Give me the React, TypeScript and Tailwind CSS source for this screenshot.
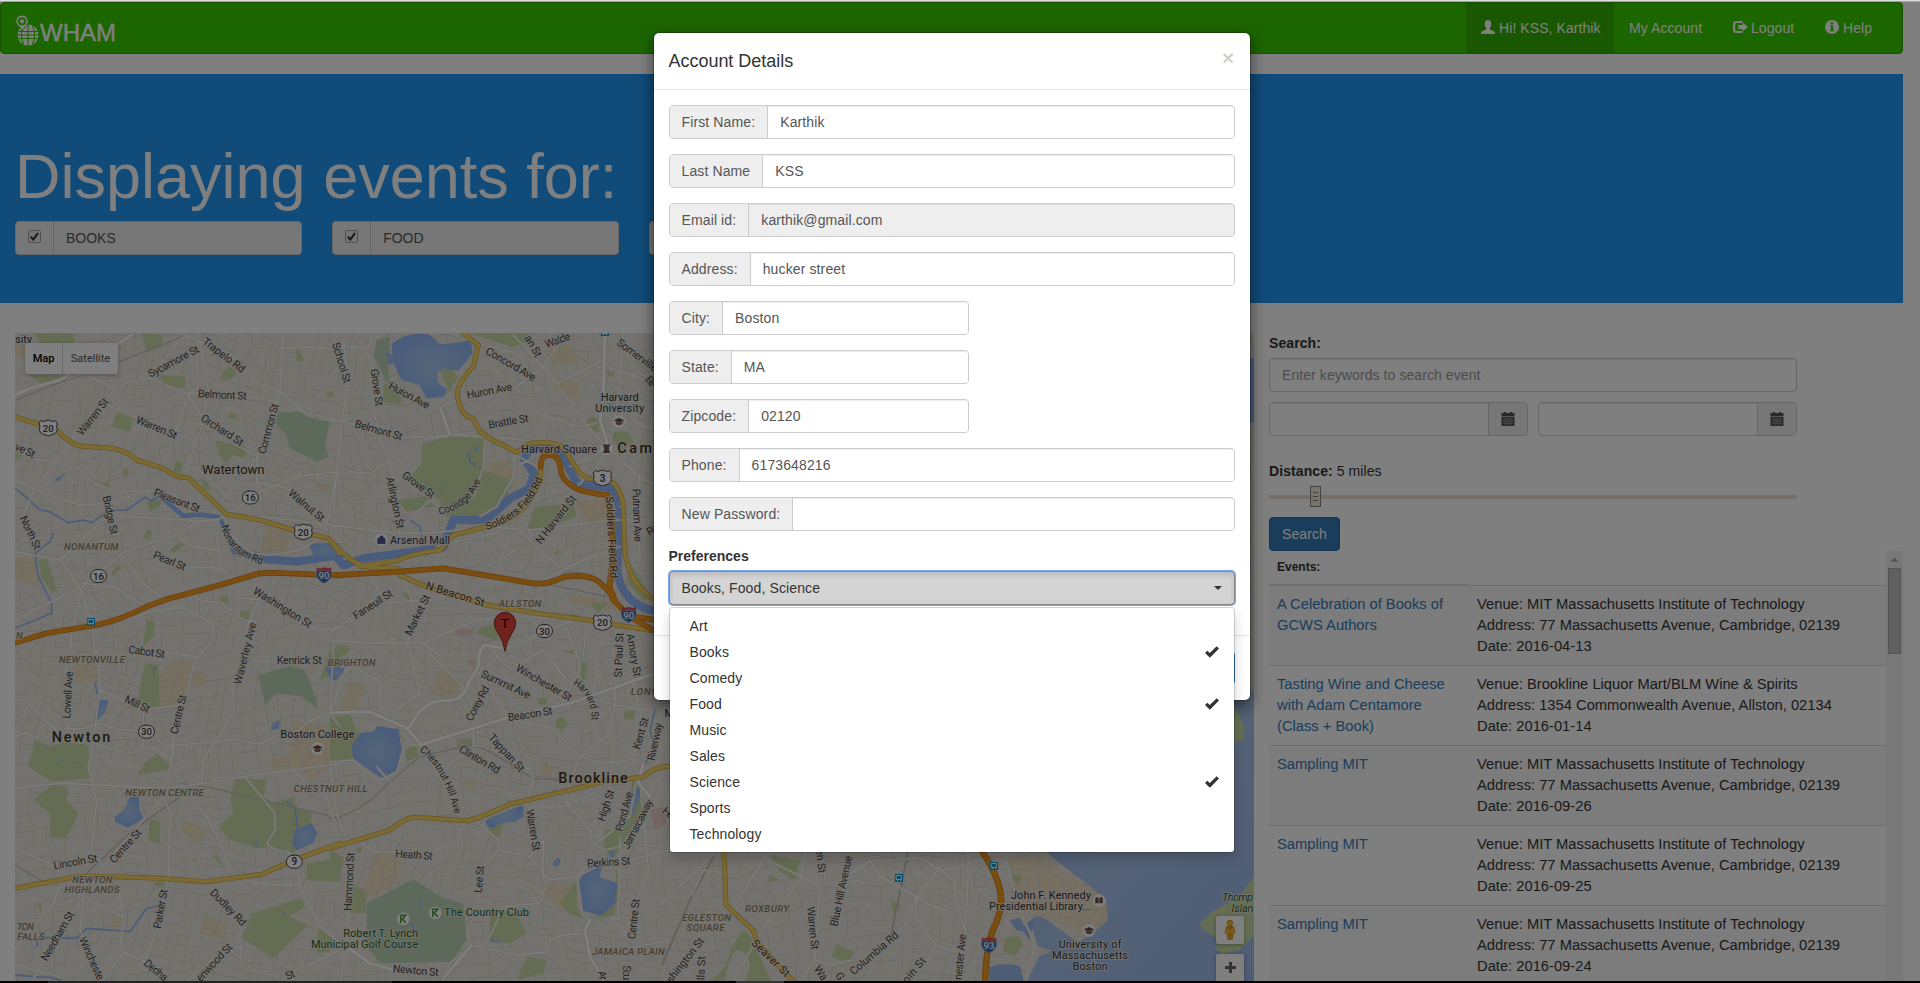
import React from "react";

/* ------------------------------------------------------------------ */
/* Icons                                                              */
/* ------------------------------------------------------------------ */

const UserIcon = () => (
  <svg viewBox="0 0 14 14" className="h-[14px] w-[14px] fill-current">
    <path d="M7 0C9 0 10.3 1.4 10.3 3.6c0 1.9-.7 3.6-1.5 4.5v1.2c.3.7 4.4 1.8 5 3 .2.4.2 1 .2 1.7H0c0-.7 0-1.3.2-1.7.6-1.2 4.700-2.300 5-3V8.100C4.400 7.200 3.700 5.500 3.700 3.600 3.700 1.400 5 0 7 0z" />
  </svg>
);

const LogoutIcon = () => (
  <svg viewBox="0 0 15 14" className="h-[14px] w-[15px] fill-current">
    <path d="M3 1h6.500v2H3.400c-.8 0-1.200.4-1.200 1.100v5.700c0 .8.4 1.200 1.200 1.200H9.500v2H3c-1.900 0-3-1.100-3-3V4c0-1.900 1.100-3 3-3z" />
    <path d="M9.500 2.500L15 7l-5.500 4.500V9H5.300V5h4.200z" />
  </svg>
);

const InfoIcon = () => (
  <svg viewBox="0 0 14 14" className="h-[14px] w-[14px] fill-current">
    <path
      fillRule="evenodd"
      d="M7 0a7 7 0 1 1 0 14A7 7 0 0 1 7 0zM5.800 2.300v2h2.400v-2zM4.900 5.300v1h1v3.900h-1v1h4.200v-1h-1V5.300z"
    />
  </svg>
);

const CalendarIcon = () => (
  <svg viewBox="0 0 14 14" className="h-[14px] w-[14px]">
    <path fill="#555" d="M.5 1H3V0h2v1h4V0h2v1h2.500v3H.5z" />
    <path fill="#555" d="M.5 4.600h13V14H.5z" />
    <path
      stroke="#aaa"
      strokeWidth=".5"
      d="M2 7h10M2 9.200h10M2 11.400h10M4 6v7M6 6v7M8 6v7M10 6v7"
    />
  </svg>
);

const TickIcon = () => (
  <svg viewBox="0 0 14 12" className="h-[12px] w-[14px] fill-[#333]">
    <path d="M0 7l2.300-2.300 2.500 2.400L11.700.3 14 2.400 4.900 11.700z" />
  </svg>
);

const Logo = () => (
  <div className="flex items-end text-white">
    <svg viewBox="0 0 25 31" className="h-[31px] w-[25px]">
      <circle cx="13" cy="20" r="10.500" fill="#fff" />
      <path
        fill="none"
        stroke="#38cc00"
        strokeWidth="1.100"
        d="M2 16.500h22M2 23.500h22M2 20h22M13 9v22M8.500 11c-3 6-3 12 0 18M17.500 11c3 6 3 12 0 18"
      />
      <path
        fill="#fff"
        stroke="#38cc00"
        strokeWidth="1"
        d="M7 0a6.200 6.200 0 0 1 6.200 6.200C13.200 9.500 9 12 7.200 16.500 5.500 12 .8 9.500.8 6.200A6.200 6.200 0 0 1 7 0z"
      />
      <circle cx="7" cy="6.300" r="4" fill="#38cc00" />
      <circle cx="7" cy="6.300" r="2.100" fill="#fff" />
    </svg>
    <span className="text-[24px] leading-[26px] [-webkit-text-stroke:0.4px_white]">WHAM</span>
  </div>
);

/* ------------------------------------------------------------------ */
/* Map                                                                */
/* ------------------------------------------------------------------ */

type TileKey = "a" | "b" | "c" | "d";
const ORIGIN: Record<TileKey, [number, number]> = {
  a: [0, 320],
  b: [330, 320],
  c: [0, 650],
  d: [330, 650],
};
type TileData = Partial<Record<TileKey, string[]>>;

function TileLayer({ data, ...props }: { data: TileData } & React.SVGProps<SVGGElement>) {
  return (
    <g {...props}>
      {(Object.keys(data) as TileKey[]).map((k) => (
        <g key={k} transform={`translate(${ORIGIN[k][0]} ${ORIGIN[k][1]}) scale(0.33333)`}>
          {data[k]!.map((d, i) => (
            <path key={i} d={d} />
          ))}
        </g>
      ))}
    </g>
  );
}

function streetMesh() {
  const step = 12;
  const hash = (i: number, j: number, s: number) => {
    const v = Math.sin(i * 127.1 + j * 311.7 + s * 74.7) * 43758.5453;
    return v - Math.floor(v);
  };
  const pt = (i: number, j: number) => {
    const x = 5 + i * step;
    const y = 325 + j * step;
    const dx = Math.sin(y / 47 + x / 130) * 14 + (hash(i, j, 1) - 0.5) * 6;
    const dy = Math.sin(x / 58 - y / 90) * 15 + (hash(i, j, 2) - 0.5) * 6;
    return `${(x + dx).toFixed(1)} ${(y + dy).toFixed(1)}`;
  };
  let d = "";
  for (let i = -2; i < 108; i++) {
    for (let j = -2; j < 58; j++) {
      if (hash(i, j, 3) > 0.24) d += `M${pt(i, j)}L${pt(i + 1, j)}`;
      if (hash(i, j, 4) > 0.36) d += `M${pt(i, j)}L${pt(i, j + 1)}`;
    }
  }
  return d;
}
const MESH = streetMesh();

const TAN: TileData = {
  a: ["M795 620L870 630 865 690 780 700z", "M45 715L100 715 130 790 100 795 45 780z", "M45 75L75 80 75 115 45 110z", "M945 490h45v28l-30-5z"],
  b: ["M470 430L545 415 555 500 490 490z", "M735 540L830 540 830 620 760 600z", "M680 170L750 190 740 240 670 210z", "M720 820L860 850 850 870 720 850z", "M640 90l80-20 20 60-70 10z"],
  c: ["M215 50L295 35 300 95 230 100z", "M520 25L575 35 560 120 530 165 475 170 475 80z", "M575 60l50 15-10 40-55-10z", "M880 215L1020 230 1020 330 930 390 900 350 810 360 820 310 870 320z", "M560 505L620 545 595 585 540 535z", "M610 800l70 20-10 50-70-20z", "M340 795l25 5-5 40-25-8z"],
  d: ["M135 605L215 620 200 700 100 750 110 690z", "M640 705L730 700 720 750 690 780 640 730z", "M640 335l30 20-10 30-35-15z", "M330 60l70 30-20 60-80-30z", "M60 90l50 20-30 60-60 30z", "M405 385l30 10-5 30-25-10z"],
};

const PINK: TileData = {
  b: ["M375 925L430 930 430 950 370 945z"],
  d: ["M960 480L1000 470 1010 520 975 540z", "M415 25l20 5-5 20-12-5z"],
};

const PARKS: TileData = {
  a: [
    "M100 40L220 40 225 70 130 75z", "M425 40L490 45 485 80 440 95z", "M90 165L180 165 190 185 120 190z", "M480 165L555 168 555 205 490 195z",
    "M350 275L400 295 390 335 337 320z", "M690 140L710 155 700 175 660 182 665 160z", "M645 360L700 375 720 365 745 390 730 415 700 405 680 430 660 410z",
    "M890 80L910 115 905 128 888 120z", "M690 275L710 285 705 300 685 295z", "M530 420L550 430 540 460 520 455z", "M370 445L388 450 380 472 368 465z",
    "M440 545L485 540 480 560 450 575z", "M438 630l18 3-5 27-20-4z", "M540 665L555 672 520 700 510 690z", "M115 720L140 715 170 810 155 820 125 770z",
    "M440 895L465 910 460 950 430 980z", "M660 825L685 830 685 862 655 850z", "M720 872h30l-2 30-26-2z", "M355 735l10 8-25 25-8-10z",
    "M780 485l20 10-12 10z", "M600 470q40 30 32 45l-20-12z", "M980 215h22v14h-22z", "M305 488h25l-5 20-15-5z", "M45 395l25 10-25 20z",
  ],
  b: [
    "M420 40L600 40 590 65 550 82 480 60z", "M330 150L365 145 385 175 355 215z", "M160 190L210 210 215 255 160 245z", "M275 375L365 345 465 355 460 450 545 480 530 540 440 590 350 590 330 540 250 500 240 470 275 430z",
    "M200 540L305 525 310 560 230 575z", "M615 560L730 550 740 590 620 630 590 625z", "M785 290l25 10-5 40-45-30z", "M850 335l45 0 15 30-30 28-35-35z", "M830 155h25l-2 15-20-2z",
    "M895 720L965 830 940 840 890 790z", "M215 815L245 820 240 850z", "M460 920L520 905 500 960 435 940z", "M20 975l40 5-10 25-50 8z", "M780 850l55 0-30 28z", "M720 880l30 5-5 12-25-5z", "M680 690l10 5-10 10-8-6z",
  ],
  c: [
    "M435 40L475 45 480 175 410 165z", "M105 270L150 290 190 275 265 285 270 385 155 395 85 350z", "M470 310L510 345 500 360 410 375 440 335z", "M155 405L205 410 200 450 235 490 200 565 150 560 150 490 100 450z",
    "M450 505L480 515 480 580 445 570z", "M705 385L800 390 790 440 820 460 880 440 890 470 935 490 930 560 880 610 820 590 770 595 690 570 655 530 700 490 690 450z",
    "M905 745L915 770 865 800 925 825 820 925 725 865 755 790z", "M920 640L1020 625 1020 695 920 690z", "M955 835l45 20-10 50-40 5z", "M635 612l20 5 10 32z", "M460 695h35l-5 15-30-3z", "M110 762l15 0 0 30z", "M990 0h30v60l-60 30z",
  ],
  d: [
    "M0 200L60 195 90 260 65 330 0 335z", "M225 290L260 285 265 320 230 335z", "M380 268L425 265 430 288 380 290z", "M680 205l20-5 15 20-20 25-18-15z", "M880 185l35-5-5 30-25-3z",
    "M910 370L930 390 945 470 890 560 880 590 850 620 820 600 825 540 870 530 900 450z", "M740 690L690 760 715 790 765 810 740 770z", "M860 650L872 690 850 800 790 805 820 790 855 760z", "M480 780L555 785 590 850 540 880 480 870z",
    "M590 920L650 930 640 970 560 990z", "M70 705L105 720 110 790 60 790z", "M620 145h30v20l-25-2z", "M470 510l50 10-10 40-30-5z", "M755 35l20 5-15 60-10-30z", "M80 595l15-5 0 15-15 3z", "M0 600l40 20-10 60-30 10z", "M695 0h50v20z",
  ],
};

const GOLF: TileData = {
  a: ["M835 275L905 275 920 290 990 305 975 370 985 410 950 425 870 385 860 345 825 310z"],
  b: ["M180 50L175 180 200 190 180 200 130 110 140 60z"],
  c: ["M775 75L870 48 915 60 950 150 950 175 905 140 830 130 795 165z"],
  d: ["M250 688L340 745 400 760 410 870 365 935 150 940 110 890 110 760z"],
};

const LAKES: TileData = {
  a: ["M202 453L175 485 165 478z", "M925 670l90 0 10 45-80 0z", "M280 409l5 4-4 4-5-3z", "M225 490l2 10-7 0z"],
  b: ["M185 72Q235 30 300 45L330 72Q380 70 420 60L428 100 385 152 342 146 325 155 322 185 352 210 340 230 290 236 268 195 215 180 190 130z", "M435 380l12 5-5 10-10-5z", "M168 96l20 8 0 30-14-2z", "M330 500l10 3-8 7z"],
  c: ["M300 150L325 150 315 190 290 212 288 190z", "M390 440L417 440 418 480 430 505 385 533 345 515 345 500 372 480z", "M820 218l20-5-5 25-25 0z", "M975 55L1020 50 1015 85 995 92z", "M885 540L935 520 952 550 940 580 890 600 876 580z", "M845 785l12 3-5 8z", "M770 568l0 22-8-8z", "M460 50l8 5-3 15-6-8z", "M180 328l10 4-8 4zM220 340l10-4-4 6z"],
  d: ["M65 290L90 250 130 245 142 228 205 238 215 300 200 360 155 385 110 355 70 325z", "M467 512L500 495 580 465 580 500 555 515 510 520 485 538 470 525z", "M748 690L790 640 815 650 810 682 862 700 855 760 812 798 760 782z", "M905 430L925 412 935 435 905 498 892 470z", "M670 632l18-8 4 20-20 5z", "M840 605l15 0-3 18-15-4z", "M0 52L48 55 20 90 0 92z", "M265 748l8 5 2 20-8-5z", "M240 815l18 20 8 20-15-5z", "M480 868l35 6-5 4-28-3z"],
};

const STREAMS: TileData = {
  a: ["M45 505L65 520 120 570 150 575 205 608 250 600 275 608 330 570 380 570 435 532 455 543 480 525 550 590 600 580 655 590", "M160 640L150 665 105 700 115 770 155 850 155 880 45 925"],
  b: ["M185 605L240 600 270 620 275 650", "M415 400l5 25 15 12"],
  c: ["M45 975L100 980 150 982 180 990", "M110 890L115 862 230 865 260 835 390 845 440 775 475 768", "M285 100L292 130", "M860 455l25 20 8 60"],
  d: ["M975 180L960 240 975 290 940 350"],
};

const RIVER_NARROW: TileData = {
  a: ["M480 528L550 588 600 583 655 592 690 640 700 690"],
};

const RIVER: TileData = {
  a: ["M705 690L800 718 890 725 1020 705"],
  b: ["M0 690L40 736 100 715 250 695 340 682 370 600 450 600 480 590 540 535 598 505 612 460 582 415 600 385 680 382 710 430 740 490 850 505 868 560 862 760Q880 850 968 872"],
};

const RAIL: TileData = {
  a: ["M45 240Q220 170 350 128L560 45"],
  b: ["M640 790L830 830M700 760Q800 740 850 850"],
  c: ["M260 670L400 540 540 440M540 400Q640 410 700 430L1020 505", "M45 645L130 695"],
  d: ["M0 505Q80 500 180 395L270 320 400 290Q450 280 520 330L610 385 700 390"],
};

const STREETS: TileData = {
  a: [
    "M45 215L130 195 250 160 395 45", "M345 205L390 185 450 175 530 70 560 45", "M260 165L345 205 310 250 220 350 165 430 100 510 70 590", "M310 250L585 365", "M450 175L560 220 600 218M745 230L830 245 910 275 1020 305",
    "M555 45L600 65 690 100 765 185 840 215 910 275", "M555 45L590 110 595 200 565 225", "M600 65L625 210 605 320 560 440 555 470", "M565 225L520 350 490 440", "M565 225L605 290M700 370L775 410 730 470 660 550",
    "M850 45L840 215 800 330 770 410 770 490 850 500", "M45 370L100 415 230 440 280 490 350 515 460 512", "M45 480L120 515 240 555 350 548 420 515", "M350 588L600 602 655 598", "M45 695L180 720 320 590 320 520",
    "M180 720L245 810 215 940 212 1000", "M45 900L100 870 240 805 375 693 520 650 590 608 655 598 690 580 780 515 900 468 1020 455", "M245 810L280 930 285 1010", "M360 700L430 790 480 830M245 790L340 800 420 850", "M460 675L480 720 560 740 665 745",
    "M655 598L650 660 665 745 690 780 860 880 950 930 1020 925", "M540 650Q560 690 660 690", "M675 600Q690 660 760 700L810 705 900 690 960 655", "M710 585L880 600 1020 620", "M850 500L940 560 980 610 1010 470", "M440 880L350 905 250 930M440 880Q500 860 550 865L640 910 640 950 600 1010", "M710 790L720 835 800 840", "M560 440Q600 440 650 500L700 545",
    "M775 840L745 910 730 1000", "M840 85L930 80 1020 90", "M580 825Q600 850 660 845L730 900 770 905",
  ],
  b: [
    "M0 75L105 85 150 45M105 85L140 170 130 260", "M40 60L55 190 35 310 10 560", "M0 300L40 305 80 315M220 352L350 350 440 335", "M0 470L60 455 120 460 180 420 280 360 350 345 460 350 560 358 700 375", "M130 260L150 360 180 430 190 480M215 620L300 540 330 560",
    "M360 345L330 262 380 240M180 200L330 262", "M445 70L560 100 640 140 680 190 765 310 830 380", "M550 45L640 140M560 200L640 140 700 50", "M640 285L740 320 800 310M825 40L810 300 835 380 800 440 720 520 680 590", "M880 40L870 180 850 330 835 380 925 470 968 490",
    "M835 380L770 420 720 440", "M680 190L820 120M560 240L640 290 660 280", "M465 360L460 440 430 530M555 400L550 470 500 560 450 590", "M550 400L620 440M555 440L600 420", "M0 615L200 640 300 640 470 620 600 630 850 600 968 600", "M330 690L310 770 280 830 215 1015",
    "M540 635L500 760 470 860 M470 740L560 690M320 680L450 650 520 635", "M570 630L640 700 690 740M640 780L760 720 870 680", "M120 760L150 820 70 890 0 940M150 850L280 840", "M215 770L250 850", "M0 960L120 970 280 968 440 900 530 890", "M440 1010L455 980 520 990 590 960 730 900", "M280 970L340 1015M600 890L660 960M630 800L610 890 680 900",
    "M870 560L920 580 930 700 890 740", "M960 500L920 560 930 460", "M830 140L920 170 968 160M910 300l55 30 0-40", "M770 910L760 1010M860 920L850 1010M910 930L900 1010M560 880L520 1010M700 895L740 1010",
  ],
  c: [
    "M45 145L80 155 140 215 170 240", "M45 260Q70 240 100 258L130 265 200 235 240 238 290 220 370 240 410 240", "M470 262Q490 295 530 285L650 275 700 268 780 282 830 258 900 240Q930 200 1020 186", "M200 0L205 240M290 0L300 110 280 280 265 350 290 450 275 600 310 650",
    "M300 120L430 180 430 290M290 285L390 310 460 290 500 320 520 320 520 285", "M520 260L515 345 500 385 490 440M605 0L580 50 560 130 540 160 520 260", "M45 415L180 400 490 415 620 400 760 375 880 360 1020 340", "M700 90L700 190 610 330 605 395", "M440 0L590 20M755 30L900 42 M740 0L700 110",
    "M45 595L170 650 185 690 160 760 110 820 45 900", "M290 670L490 440 510 490 505 680 470 840 435 935", "M575 440L620 500 670 600 690 670", "M735 380L825 490 825 540 800 580Q820 605 865 605L890 640 900 710 960 830 1020 880", "M725 685Q780 710 900 705", "M250 740L370 800 360 900 430 935 490 960M250 740L240 840 300 970",
    "M250 700L250 740 210 800 100 985M355 720L370 800", "M440 935L370 910 310 990", "M630 695L640 740 720 830 720 880 725 940 770 965 830 980M880 965L1020 900", "M690 885L560 990M690 890L730 895", "M45 940L100 960 180 980", "M880 360L930 410 980 440 1010 540", "M1000 0L990 190 1020 230M430 180L540 165",
  ],
  d: [
    "M0 335L70 330Q100 360 145 390L200 370 220 300 240 285 270 285", "M45 60L70 50 150 95 150 180M0 190L10 160 70 0M200 180L270 130 240 0", "M0 340L20 490 50 570 60 620 50 890 30 920", "M290 0L400 110 430 180 430 285 460 290", "M490 0L520 40 720 160M440 60L520 180 580 220 660 230 750 320 820 340",
    "M420 95L500 20 600 60M550 50L640 0 720 100 800 150", "M790 0L800 60 780 180 800 260 850 290M860 0L855 170 830 260 750 320 710 420", "M640 0L700 80 720 160M800 150L900 175 968 180M900 60L930 180 940 260", "M480 240L490 300 600 360 610 395 590 455", "M410 515L390 540 385 580 310 600M240 605L130 605 90 575 45 590",
    "M280 300L400 500M350 350L430 290M440 515L505 570 505 600 600 620 655 690 740 680 780 640", "M505 600L460 650 440 780 410 850 425 885M590 455L600 490M600 620L640 570 640 690", "M655 690L630 760 520 770 485 850 460 885", "M425 885L360 940 340 985M425 885L560 915 650 905 660 870 700 855 780 850", "M50 900L110 930 200 970M0 850L50 900 30 1000",
    "M600 470L700 470 800 425M710 425L710 460 780 540 785 575 820 600M840 420L780 550", "M920 390L900 500 800 580M930 390L945 560 955 660 880 860M820 640L740 680 755 790 775 815", "M870 560L865 810 840 800 900 860M775 920L870 900 1020 870M820 340L900 330 940 260", "M820 600L870 590 968 470M900 630L1020 600", "M140 350L180 395", "M740 0L750 60 690 170M830 345L840 420",
  ],
};

const MAIN_STREETS: TileData = {
  a: ["M45 225L90 205 180 180 395 45"],
  b: ["M330 262L360 345", "M445 1010L460 975 525 985", "M825 40L820 220 810 300 835 380"],
  d: ["M0 188L120 185 230 235 240 230Q280 150 340 152 400 155 415 100L445 50 450 0", "M270 285L430 235 540 200 720 160 968 72", "M230 235L275 285", "M50 890L120 940 210 965M340 985L425 885", "M780 810L765 840 780 920 820 990M940 340L925 400 960 440"],
};

const YELLOW: TileData = {
  a: ["M45 290L120 315 175 335Q210 370 240 378L340 385Q385 395 410 420L490 445Q520 472 565 473L680 583 780 600 880 630 985 655 1020 700"],
  b: [
    "M0 660L40 700Q80 738 120 742L205 746", "M90 740L200 722Q250 700 330 690L370 645 470 620Q560 600 600 540L632 480 632 430", "M400 40L445 75 430 140Q370 200 385 240 395 290 430 295L450 335Q500 370 520 375L560 398 600 370Q680 360 700 385L750 460Q790 490 815 475 870 480 880 560L885 700Q900 790 968 835",
    "M210 766L290 800 470 855 620 880 770 900 968 932",
  ],
  c: ["M45 715L190 688Q230 675 340 680L480 685 620 695 785 673 870 635 1020 580"],
  d: ["M0 595L180 540Q230 500 260 502L410 512Q450 505 540 462L700 425 830 392 940 382Q970 350 1020 348"],
};

const ORANGE: TileData = {
  a: ["M45 968L140 940 290 915Q360 900 440 860L500 838 660 795 770 762Q800 757 860 760L1020 766"],
  b: ["M0 766L160 758 340 745 610 790Q650 795 700 772 760 760 800 780 840 810 850 840L900 890 968 930", "M632 440Q632 405 655 405 690 405 692 450 695 480 730 500 760 518 832 525", "M845 770L838 800 855 840M895 888L968 898", "M832 525L845 600 850 700 838 800"],
};

const YELLOW_SE = "M724 851L726 905 742 920 753 930 757 942 794 982";
const ORANGE_SE = "M982 851Q996 872 1000 890T993 930Q986 948 985 982";
const STREETS_SE =
  "M716 852L660 905M692 895L703 870 725 873M766 855L735 905M766 859L820 886 815 960 800 982M822 853L825 880M733 982L762 930 800 880 805 852M840 880L870 861 920 858 941 870 955 868 985 858M870 861L880 876 930 905 950 912M941 866L918 895 905 925 850 975M918 895L915 915 935 945 925 965 900 982M935 945L965 955M941 870L955 882 955 900 965 930 960 982M968 852L968 880 965 930M1005 852Q1010 880 1022 915L1035 945 1025 982M852 960L830 965 815 960M850 885L855 880 868 884";

type Kind = "road" | "hwy" | "area" | "town" | "city" | "poi" | "park" | "mall";
const STYLES: Record<Kind, { fill: string; size: number; weight: number; italic?: boolean }> = {
  road: { fill: "#484848", size: 10.9, weight: 400 },
  hwy: { fill: "#5a3410", size: 10.9, weight: 400 },
  area: { fill: "#8b7d68", size: 9.8, weight: 500, italic: true },
  town: { fill: "#3d3220", size: 13.2, weight: 400 },
  city: { fill: "#3d3220", size: 14.4, weight: 500 },
  poi: { fill: "#333333", size: 11, weight: 400 },
  park: { fill: "#28601c", size: 11, weight: 400 },
  mall: { fill: "#363660", size: 11, weight: 400 },
};

/* tile, centre x, centre y, rotation, text, length, kind */
type Label = [TileKey | "p", number, number, number, string, number, Kind?];
const LABELS: Label[] = [
  ["a", 71, 57, 0, "sity", 50, "poi"],
  ["a", 520, 124, -28, "Sycamore St", 168],
  ["a", 672, 105, 37, "Trapelo Rd", 150],
  ["a", 667, 224, 3, "Belmont St", 147],
  ["a", 667, 330, 33, "Orchard St", 145],
  ["a", 805, 326, -75, "Common St", 155],
  ["a", 278, 290, -52, "Warren St", 132],
  ["a", 470, 322, 23, "Warren St", 130],
  ["a", 76, 391, 25, "ve St", 62],
  ["a", 700, 447, 0, "Watertown", 188, "town"],
  ["a", 331, 585, 78, "Bridge St", 118],
  ["a", 531, 541, 21, "Pleasant St", 145],
  ["a", 92, 638, 65, "North St", 108],
  ["a", 274, 681, 0, "NONANTUM", 164, "area"],
  ["a", 509, 722, 22, "Pearl St", 102],
  ["a", 920, 556, 40, "Walnut St", 130],
  ["a", 848, 862, 32, "Washington St", 200],
  ["a", 735, 1000, -76, "Waverley Ave", 190],
  ["a", 440, 995, 8, "Cabot St", 110],
  ["a", 58, 948, 0, "N", 22, "area"],
  ["c", 276, 30, 0, "NEWTONVILLE", 198, "area"],
  ["b", 35, 128, 73, "School St", 125],
  ["b", 543, 132, 30, "Concord Ave", 168],
  ["b", 238, 226, 28, "Huron Ave", 135],
  ["b", 478, 212, -11, "Huron Ave", 138],
  ["b", 141, 202, 82, "Grove St", 112],
  ["b", 146, 330, 16, "Belmont St", 147],
  ["b", 535, 304, -10, "Brattle St", 122],
  ["b", 266, 494, 36, "Grove St", 112],
  ["b", 196, 548, 78, "Arlington St", 158],
  ["b", 687, 387, 0, "Harvard Square", 228, "poi"],
  ["b", 869, 232, 0, "Harvard", 114, "poi"],
  ["b", 869, 265, 0, "University", 147, "poi"],
  ["b", 998, 385, 0, "Cambridge", 272, "city"],
  ["b", 677, 598, -52, "N Harvard St", 175],
  ["b", 846, 652, 87, "Soldiers Field Rd", 245, "hwy"],
  ["b", 922, 586, 88, "Putnam Ave", 160],
  ["b", 922, 105, 36, "Somerville", 142],
  ["b", 682, 60, -20, "Walde", 78],
  ["b", 610, 78, 60, "an St", 70],
  ["b", 962, 183, 50, "Be", 30],
  ["b", 962, 632, -30, "Ri", 24],
  ["b", 270, 660, 0, "Arsenal Mall", 180, "mall"],
  ["b", 376, 822, 17, "N Beacon St", 182, "hwy"],
  ["b", 570, 852, 0, "ALLSTON", 128, "area"],
  ["b", 128, 853, -33, "Faneuil St", 135],
  ["b", 262, 885, -64, "Market St", 132],
  ["c", 203, 135, -87, "Lowell Ave", 142],
  ["c", 412, 162, 25, "Mill St", 80],
  ["c", 535, 193, -77, "Centre St", 120],
  ["c", 898, 31, 0, "Kenrick St", 135],
  ["d", 65, 39, 0, "BRIGHTON", 143, "area"],
  ["c", 243, 262, 0, "Newton", 176, "city"],
  ["c", 952, 252, 0, "Boston College", 222, "poi"],
  ["c", 494, 427, 0, "NEWTON CENTRE", 236, "area"],
  ["c", 992, 417, 0, "CHESTNUT HILL", 222, "area"],
  ["c", 226, 635, -10, "Lincoln St", 132],
  ["c", 376, 588, -48, "Centre St", 125],
  ["c", 277, 690, 0, "NEWTON", 120, "area"],
  ["c", 276, 720, 0, "HIGHLANDS", 165, "area"],
  ["c", 76, 831, 0, "TON", 52, "area"],
  ["c", 93, 861, 0, "FALLS", 82, "area"],
  ["c", 172, 858, -60, "Needham St", 166],
  ["c", 275, 925, 66, "Wincheste", 138],
  ["c", 481, 777, -80, "Parker St", 120],
  ["c", 468, 960, 40, "Dedha", 82],
  ["c", 685, 772, 46, "Dudley Rd", 140],
  ["c", 642, 937, -47, "enwood St", 142],
  ["c", 870, 974, -25, "St", 28],
  ["d", 152, 850, 0, "Robert T. Lynch", 225, "park"],
  ["d", 104, 882, 0, "Municipal Golf Course", 322, "park"],
  ["d", 470, 787, 0, "The Country Club", 254, "park"],
  ["d", 257, 961, 5, "Newton St", 138],
  ["d", 57, 695, -87, "Hammond St", 175],
  ["d", 252, 614, 4, "Heath St", 112],
  ["d", 447, 688, -84, "Lee St", 82],
  ["d", 449, 328, 30, "Clinton Rd", 136],
  ["d", 530, 308, 47, "Tappan St", 142],
  ["d", 610, 540, 80, "Warren St", 125],
  ["d", 442, 160, -62, "Corey Rd", 115],
  ["d", 528, 103, 25, "Summit Ave", 160],
  ["d", 642, 98, 30, "Winchester St", 188],
  ["d", 600, 192, -9, "Beacon St", 135],
  ["d", 789, 385, 0, "Brookline", 208, "city"],
  ["d", 990, 126, 0, "LONGWOOD", 175, "area"],
  ["d", 866, 15, -88, "St Paul St", 135],
  ["d", 912, 15, 80, "Amory St", 130],
  ["d", 932, 250, -74, "Kent St", 98],
  ["d", 974, 275, -78, "Riverway", 115],
  ["d", 828, 466, -72, "High St", 98],
  ["d", 882, 485, -75, "Pond Ave", 122],
  ["d", 922, 522, -63, "Jamaicaway", 162],
  ["d", 836, 636, -4, "Perkins St", 130],
  ["d", 911, 807, -84, "Centre St", 122],
  ["d", 895, 906, 0, "JAMAICA PLAIN", 218, "area"],
  ["d", 890, 968, 90, "Sou", 45],
  ["d", 818, 976, 76, "Ar", 28],
  ["d", 1015, 488, 40, "He", 34],
  ["d", 1018, 190, 0, "M", 26, "poi"],
  ["p", 706.5, 918, 0, "EGLESTON", 49, "area"],
  ["p", 705.5, 928, 0, "SQUARE", 38, "area"],
  ["p", 767, 909, 0, "ROXBURY", 44, "area"],
  ["p", 771, 958, 44, "Seaver St", 48, "hwy"],
  ["p", 813, 928, 84, "Warren St", 43],
  ["p", 821, 861, 84, "en St", 24],
  ["p", 841, 891, -78, "Blue Hill Avenue", 72],
  ["p", 874, 953, -41, "Columbia Rd", 60],
  ["p", 914, 970, -50, "oin St", 30],
  ["p", 960, 957, -84, "nester Ave", 46],
  ["p", 685, 960, -52, "shington St", 54],
  ["p", 701, 968, -88, "lls St", 24],
  ["p", 821, 973, 55, "Wa", 15],
  ["p", 840, 976, 55, "G", 7],
  ["p", 1051, 895, 0, "John F. Kennedy", 80, "poi"],
  ["p", 1040, 906, 0, "Presidential Library...", 102, "poi"],
  ["p", 1090, 944, 0, "University of", 63, "poi"],
  ["p", 1090, 955, 0, "Massachusetts", 76, "poi"],
  ["p", 1090, 966, 0, "Boston", 35, "poi"],
  ["p", 1237.5, 897, 0, "Thomp", 31, "park"],
  ["p", 1242.5, 908, 0, "Islan", 22, "park"],
];

const CURVED: { tile: TileKey; id: string; d: string; text: string; len: number; kind: Kind }[] = [
  { tile: "a", id: "nonantum", d: "M664 618Q680 705 806 740", text: "Nonantum Rd", len: 176, kind: "road" },
  { tile: "b", id: "coolidge", d: "M328 584Q425 565 455 470", text: "Coolidge Ave", len: 168, kind: "road" },
  { tile: "b", id: "soldiers", d: "M470 630Q605 590 644 455", text: "Soldiers Field Rd", len: 236, kind: "hwy" },
  { tile: "d", id: "chestnut", d: "M268 302Q345 360 378 510", text: "Chestnut Hill Ave", len: 222, kind: "road" },
  { tile: "d", id: "harvard", d: "M728 104Q790 135 784 222", text: "Harvard St", len: 128, kind: "road" },
];

function MapLabel({ label }: { label: Label }) {
  const [tile, lx, ly, rot, text, len, kind = "road"] = label;
  const s = STYLES[kind];
  const x = tile === "p" ? lx : ORIGIN[tile][0] + lx / 3;
  const y = tile === "p" ? ly : ORIGIN[tile][1] + ly / 3;
  return (
    <text
      transform={`translate(${x} ${y}) rotate(${rot})`}
      y={s.size * 0.35}
      textAnchor="middle"
      fontSize={s.size}
      fontWeight={s.weight}
      fontStyle={s.italic || (kind === "park" && tile === "p") ? "italic" : "normal"}
      fill={s.fill}
      textLength={tile === "p" ? len : len / 3}
    >
      {text}
    </text>
  );
}

function Shield({ x, y, text, type }: { x: number; y: number; text: string; type: "us" | "state" | "i" }) {
  const wide = text.length > 1;
  return (
    <g transform={`translate(${x} ${y})`}>
      {type === "us" && (
        <path
          d="M-7-7.500L-5-6.500 0-7.800 5-6.500 7-7.500 9-4.500Q7.500-2 9 1.500 8.500 5.500 5 6.300L0 7.800-5 6.300Q-8.500 5.500-9 1.500-7.500-2-9-4.500z"
          fill="#fff"
          stroke="#4a4a4a"
          strokeWidth="1"
        />
      )}
      {type === "state" && <rect x={-8} y={-6.500} width={16} height={13} rx={6.500} fill="#fff" stroke="#4a4a4a" strokeWidth="1" />}
      {type === "i" && (
        <>
          <path d="M-7.500-4Q-9.500 4 0 8.500 9.500 4 7.500-4z" fill="#3b6fb5" stroke="#dde" strokeWidth=".5" />
          <path d="M-7.500-4.300L-7-7.500-4-6.500 0-7.800 4-6.500 7-7.500 7.500-4.300z" fill="#d0505a" />
        </>
      )}
      <text
        y={type === "i" ? 4 : 3.600}
        textAnchor="middle"
        fontSize={wide ? 9.600 : 10}
        fontWeight={500}
        fill={type === "i" ? "#fff" : "#333"}
        stroke="none"
      >
        {text}
      </text>
    </g>
  );
}

const PoiDot = ({ x, y, children }: { x: number; y: number; children: React.ReactNode }) => (
  <g transform={`translate(${x} ${y})`}>
    <circle r="6.300" fill="#fff" />
    {children}
  </g>
);

const Cap = () => (
  <path d="M-4.500-1.200L0-3.300 4.500-1.200 0 1zM-2.600.6L0 1.900 2.600.6V2.600Q0 4.200-2.600 2.600zM4-1v3.500" fill="#6b4a44" stroke="#6b4a44" strokeWidth=".5" />
);

const Golfer = () => <path d="M-3-3.600H3M2-3L-1 0 2 3.600M-2.500-2V3.800" fill="none" stroke="#3d8a2c" strokeWidth="1.400" />;

const Train = ({ x, y }: { x: number; y: number }) => (
  <g transform={`translate(${x} ${y})`}>
    <rect x="-4" y="-4" width="8" height="8" fill="#0d9ddb" />
    <path d="M-2.400-2.500h4.800v4h-4.800zM-1.800 3l.8-1.300M1.800 3L1 1.700" fill="none" stroke="#fff" strokeWidth="1" />
  </g>
);

function MapCanvas() {
  return (
    <svg
      viewBox="15 333 1239 648"
      className="block h-[648px] w-[1239px]"
      fontFamily="Roboto, 'Liberation Sans', sans-serif"
      fill="none"
      strokeLinejoin="round"
      strokeLinecap="round"
    >
      <defs>
        <radialGradient id="water">
          <stop offset="0" stopColor="#aecbf0" />
          <stop offset="1" stopColor="#93b9f7" />
        </radialGradient>
        <linearGradient id="sea" x1="0" y1="0" x2="1" y2="1">
          <stop offset="0" stopColor="#96b4ea" />
          <stop offset=".5" stopColor="#a9c4ec" />
          <stop offset="1" stopColor="#9dbaec" />
        </linearGradient>
      </defs>
      <rect x="0" y="320" width="1300" height="680" fill="#e9e5dc" />
      <TileLayer data={TAN} fill="#ecdcbc" />
      <path d="M1005 855L1040 855 1060 870 1094 890 1106 899 1108 920 1088 937 1050 918 1015 905z" fill="#ecdfc4" />
      <TileLayer data={PINK} fill="#e8c8c4" />
      <path d={MESH} stroke="#d9d5cb" strokeWidth=".9" />
      <TileLayer data={PARKS} fill="#c9dba6" />
      <path
        d="M739 935Q745 925 752 940L772 982 708 982Q728 970 730 950zM855 952l-18-8-5 12 15 8zM770 855l30 5-5 20-15-8zM1010 875l12 0-3 12zM890 900l12 5-8 8zM1005 938q15-5 18 6l-8 12-12-5zM780 880l-10-5-2 8z"
        fill="#c9dba6"
      />
      <path d="M736 950q12 0 14 15l-5 17-20 0q2-20 11-32z" fill="#e9e5dc" />
      <TileLayer data={GOLF} fill="#b9d3b6" />
      <TileLayer data={STREAMS} stroke="#93b9f7" strokeWidth="5" />
      <TileLayer data={RIVER_NARROW} stroke="#93b9f7" strokeWidth="14" />
      <TileLayer data={RIVER} stroke="#93b9f7" strokeWidth="25" />
      <TileLayer data={LAKES} fill="url(#water)" />
      <path
        d="M1046 851L1058 862 1086 883 1094 890 1106 899 1108 920 1088 937 1077 942 1043 917 1035 917 1024 925 1033 930 1038 947 1052 951 1039 956 1027 982 1254 982 1254 690 1200 700 1180 850z"
        fill="url(#sea)"
      />
      <path d="M989 967Q1005 962 1020 966L1024 982 989 982zM1010 920l10-2 4 8 10-6-5 20-5-8-8-2z" fill="#9dbaec" />
      <path d="M1250 358h4v64h-4z" fill="#93b9f7" />
      <path d="M1230 700L1240 716 1245 728 1243 740 1230 744z" fill="#c9dba6" />
      <path d="M1254 876L1240 896 1212 912 1200 924 1206 940 1222 954 1240 950 1254 935z" fill="#c9dba6" />
      <path d="M1202 928q8 8 20 12l-8 8q-8-6-12-20z" fill="#9dbaec" />
      <TileLayer data={RAIL} stroke="#c4c1ba" strokeWidth="4" />
      <path d="M716 852L690 900 662 965M908 852L890 940" stroke="#c4c1ba" strokeWidth="2" />
      <TileLayer data={STREETS} stroke="#d6d2c9" strokeWidth="7" />
      <TileLayer data={STREETS} stroke="#f9f8f4" strokeWidth="4.300" />
      <path d={STREETS_SE} stroke="#d6d2c9" strokeWidth="2.400" />
      <path d={STREETS_SE} stroke="#f9f8f4" strokeWidth="1.500" />
      <TileLayer data={MAIN_STREETS} stroke="#cdc9c0" strokeWidth="12" />
      <TileLayer data={MAIN_STREETS} stroke="#fdfdfb" strokeWidth="9" />
      <TileLayer data={YELLOW} stroke="#c9a448" strokeWidth="15" />
      <TileLayer data={YELLOW} stroke="#f6d664" strokeWidth="11" />
      <path d={YELLOW_SE} stroke="#c9a448" strokeWidth="5" />
      <path d={YELLOW_SE} stroke="#f6d664" strokeWidth="3.700" />
      <TileLayer data={ORANGE} stroke="#cf8422" strokeWidth="17" />
      <TileLayer data={ORANGE} stroke="#f79a20" strokeWidth="12" />
      <path d={ORANGE_SE} stroke="#cf8422" strokeWidth="6.500" />
      <path d={ORANGE_SE} stroke="#f79a20" strokeWidth="4.500" />

      <g stroke="#ece9e1" strokeWidth="2" strokeOpacity=".8" style={{ paintOrder: "stroke" }}>
        {LABELS.map((l, i) => (
          <MapLabel key={i} label={l} />
        ))}
        {CURVED.map((c) => (
          <g key={c.id} transform={`translate(${ORIGIN[c.tile][0]} ${ORIGIN[c.tile][1]}) scale(0.33333)`}>
            <path id={c.id} d={c.d} stroke="none" />
            <text fontSize="31" fill={STYLES[c.kind].fill} strokeWidth="6">
              <textPath href={`#${c.id}`} textLength={c.len} lengthAdjust="spacingAndGlyphs">
                {c.text}
              </textPath>
            </text>
          </g>
        ))}
      </g>

      <Shield x={48.300} y={428} text="20" type="us" />
      <Shield x={250.300} y={497.500} text="16" type="state" />
      <Shield x={303.300} y={532} text="20" type="us" />
      <Shield x={98.500} y={576} text="16" type="state" />
      <Shield x={324} y={575} text="90" type="i" />
      <Shield x={602.500} y={478} text="3" type="us" />
      <Shield x={602.500} y={622.700} text="20" type="us" />
      <Shield x={544.500} y={631} text="30" type="state" />
      <Shield x={628.700} y={614.500} text="90" type="i" />
      <Shield x={146.500} y={731.700} text="30" type="state" />
      <Shield x={294.300} y={861.700} text="9" type="state" />
      <Shield x={989} y={945} text="93" type="i" />
      <Train x={91} y={622} />
      <Train x={605} y={332} />
      <Train x={994} y={866} />
      <Train x={899} y={878} />
      <PoiDot x={619} y={421.500}><Cap /></PoiDot>
      <PoiDot x={606.500} y={448.500}>
        <path d="M-3.500-4.500h1.500v1h1.200v-1h1.600v1H2v-1h1.500V-2H2.500v4L4 4.500h-8L-2.500 2v-4h-1z" fill="#6b5a54" />
      </PoiDot>
      <PoiDot x={381.500} y={539.500}>
        <path d="M-3.500-1h7v5h-7zM-1.800-1v-1.500q1.800-2.500 3.600 0V-1" fill="#4a5590" stroke="#4a5590" strokeWidth=".8" />
      </PoiDot>
      <PoiDot x={317.500} y={748.500}><Cap /></PoiDot>
      <PoiDot x={435.300} y={912.700}><Golfer /></PoiDot>
      <PoiDot x={403.300} y={918.700}><Golfer /></PoiDot>
      <PoiDot x={1099} y={900.500}>
        <path d="M-3.700-2.700Q-2-3.700-.4-2.600V3Q-2 2-3.700 3zM3.700-2.700Q2-3.700.4-2.600V3Q2 2 3.700 3z" fill="#6b4a44" />
      </PoiDot>
      <PoiDot x={1089} y={930.500}><Cap /></PoiDot>

      <path d="M505 651Q503.500 641 498 633 494.300 628 494.300 623a10.700 10.700 0 0 1 21.400 0Q515.700 628 512 633 506.500 641 505 651z" fill="#e0453c" stroke="#8c2a22" strokeWidth="1" />
      <text x="505" y="627.500" fontSize="13" textAnchor="middle" fill="#200">T</text>
    </svg>
  );
}

function MapPanel() {
  return (
    <div className="relative h-[648px] w-[1239px] overflow-hidden">
      <MapCanvas />
      <div className="absolute left-[10px] top-[10px] flex h-[31px] rounded-[2px] bg-white font-['Roboto'] text-[11px] leading-[31px] shadow-[0_1px_4px_rgba(0,0,0,0.3)]">
        <div className="w-[38px] border-r border-[#d8d8d8] text-center font-medium text-black">Map</div>
        <div className="w-[55px] text-center text-[#565656]">Satellite</div>
      </div>
      <div className="absolute right-[10px] top-[583px] flex h-[28px] w-[28px] items-center justify-center rounded-[2px] bg-white shadow-[0_1px_4px_rgba(0,0,0,0.3)]">
        <svg viewBox="0 0 12 20" className="h-[20px] w-[12px]">
          <circle cx="6" cy="3" r="2.900" fill="#f2b030" stroke="#c07f10" strokeWidth=".6" />
          <path d="M2.200 6.500h7.600l1.200 6.500H9.300L8.300 19.500H3.700L2.700 13H1z" fill="#f2b030" stroke="#c07f10" strokeWidth=".6" />
          <path d="M4.500 6.500L6 9l1.500-2.500M6 13v6" fill="none" stroke="#c06a10" strokeWidth=".8" />
        </svg>
      </div>
      <div className="absolute right-[10px] top-[621px] flex h-[30px] w-[28px] items-start justify-center rounded-[2px] bg-white pt-[8px] shadow-[0_1px_4px_rgba(0,0,0,0.3)]">
        <svg viewBox="0 0 11 11" className="h-[11px] w-[11px]">
          <path d="M4 0h3v4h4v3H7v4H4V7H0V4h4z" fill="#666" />
        </svg>
      </div>
    </div>
  );
}

/* ------------------------------------------------------------------ */
/* Page                                                               */
/* ------------------------------------------------------------------ */

function Navbar() {
  return (
    <nav className="flex h-[52px] shrink-0 justify-between rounded-[4px] border border-[#2ea400] bg-[#38cc00] pl-[14px] pr-[15px]">
      <div className="pt-[12px]">
        <Logo />
      </div>
      <ul className="flex whitespace-nowrap text-[14px] leading-[20px] tracking-[0.08px] text-white">
        <li className="flex w-[148px] gap-[4px] bg-[#32b000] py-[15px] pl-[15px]">
          <span className="pt-[2px]"><UserIcon /></span>Hi! KSS, Karthik
        </li>
        <li className="w-[104px] py-[15px] pl-[15px]">My Account</li>
        <li className="flex w-[92px] gap-[3px] py-[15px] pl-[15px]">
          <span className="pt-[2px]"><LogoutIcon /></span>Logout
        </li>
        <li className="flex w-[77px] gap-[4px] py-[15px] pl-[15px]">
          <span className="pt-[2px]"><InfoIcon /></span>Help
        </li>
      </ul>
    </nav>
  );
}

function CategoryBox({ label }: { label: string }) {
  return (
    <div className="w-[317.170px] shrink-0 px-[15px]">
      <div className="flex h-[34px] rounded-[4px] border border-[#ccc] bg-[#eee]">
        <div className="flex w-[38px] justify-center border-r border-[#ccc] pt-[8px]">
          <span className="flex h-[13px] w-[13px] items-center justify-center rounded-[2px] border border-[#a0a0a0] bg-[#ececec]">
            <svg viewBox="0 0 9 9" className="h-[9px] w-[9px]">
              <path d="M.8 4.600L3.300 7.600 8 1" fill="none" stroke="#333" strokeWidth="2.100" />
            </svg>
          </span>
        </div>
        <div className="pl-[12px] text-[14px] leading-[32px] text-[#555]">{label}</div>
      </div>
    </div>
  );
}

function Jumbotron() {
  return (
    <section className="mt-[20px] h-[229px] bg-[#2196f3] pt-[68px]">
      <h1 className="mb-[10px] pl-[15px] text-[63px] leading-[69px] text-white">Displaying events for:</h1>
      <div className="flex">
        <CategoryBox label="BOOKS" />
        <CategoryBox label="FOOD" />
        <CategoryBox label="SCIENCE" />
      </div>
    </section>
  );
}

function DateField() {
  return (
    <div className="flex h-[34px] w-[259px] rounded-[4px] border border-[#ccc] shadow-[inset_0_1px_1px_rgba(0,0,0,0.075)]">
      <div className="flex-1" />
      <div className="flex w-[39px] items-center justify-center rounded-r-[3px] border-l border-[#ccc] bg-[#eee]">
        <CalendarIcon />
      </div>
    </div>
  );
}

const EVENTS = [
  ["A Celebration of Books of GCWS Authors", "MIT Massachusetts Institute of Technology", "77 Massachusetts Avenue, Cambridge, 02139", "2016-04-13"],
  ["Tasting Wine and Cheese with Adam Centamore (Class + Book)", "Brookline Liquor Mart/BLM Wine & Spirits", "1354 Commonwealth Avenue, Allston, 02134", "2016-01-14"],
  ["Sampling MIT", "MIT Massachusetts Institute of Technology", "77 Massachusetts Avenue, Cambridge, 02139", "2016-09-26"],
  ["Sampling MIT", "MIT Massachusetts Institute of Technology", "77 Massachusetts Avenue, Cambridge, 02139", "2016-09-25"],
  ["Sampling MIT", "MIT Massachusetts Institute of Technology", "77 Massachusetts Avenue, Cambridge, 02139", "2016-09-24"],
];

function EventList() {
  return (
    <div className="flex h-[430px] overflow-hidden">
      <div className="w-[617px] shrink-0">
        <div className="flex h-[35px] items-end">
          <div className="h-[35px] w-[200px] border-b-2 border-[#ddd] p-[8px] text-[12px] font-bold leading-[17px]">Events:</div>
          <div className="h-px flex-1 bg-[#ddd]" />
        </div>
        {EVENTS.map(([name, venue, address, date], i) => (
          <div
            key={i}
            className={
              "flex text-[14.730px] leading-[21px] " +
              (i === 0 ? "h-[79px] " : "h-[80px] border-t border-[#ddd] ") +
              (i % 2 === 0 ? "bg-[#f9f9f9]" : "")
            }
          >
            <div className="w-[200px] shrink-0 p-[8px] text-[#337ab7]">{name}</div>
            <div className="p-[8px] text-[#333]">
              Venue: {venue}
              <br />
              Address: {address}
              <br />
              Date: {date}
            </div>
          </div>
        ))}
      </div>
      <div className="flex w-[17px] flex-col items-center bg-[#f1f1f1]">
        <svg viewBox="0 0 17 17" className="h-[17px] w-[17px]">
          <path d="M4.800 10.500h7.400L8.500 6.600z" fill="#a3a3a3" />
        </svg>
        <div className="h-[86px] w-[13px] border border-[#a8a8a8] bg-[#c1c1c1]" />
      </div>
    </div>
  );
}

function Sidebar() {
  return (
    <aside className="w-[634px] text-[14px] leading-[20px] text-[#333]">
      <div className="w-[528px] tracking-[0.08px]">
        <div className="mb-[5px] font-bold">Search:</div>
        <div className="h-[34px] rounded-[4px] border border-[#ccc] pl-[12px] leading-[32px] text-[#999] shadow-[inset_0_1px_1px_rgba(0,0,0,0.075)]">
          Enter keywords to search event
        </div>
        <div className="mt-[10px] flex justify-between">
          <DateField />
          <DateField />
        </div>
        <div className="mt-[25px]">
          <span className="font-bold">Distance:</span> 5 miles
        </div>
        <div className="relative mt-[5px] flex h-[21px] items-center">
          <div className="h-[4px] w-full bg-[#e6ddd3]" />
          <div className="absolute left-[41px] top-0 flex h-[21px] w-[11px] flex-col items-center justify-center gap-[3px] border border-[#8a8578] bg-[#ece9d8]">
            <span className="h-px w-[5px] bg-[#8a8578]" />
            <span className="h-px w-[5px] bg-[#8a8578]" />
            <span className="h-px w-[5px] bg-[#8a8578]" />
          </div>
        </div>
        <button className="mt-[10px] block h-[34px] w-[71px] rounded-[4px] border border-[#2e6da4] bg-[#337ab7] text-white">Search</button>
      </div>
      <EventList />
    </aside>
  );
}

/* ------------------------------------------------------------------ */
/* Account dialog                                                     */
/* ------------------------------------------------------------------ */

const FIELDS: { label: string; value: string; short?: boolean; disabled?: boolean }[] = [
  { label: "First Name:", value: "Karthik" },
  { label: "Last Name", value: "KSS" },
  { label: "Email id:", value: "karthik@gmail.com", disabled: true },
  { label: "Address:", value: "hucker street" },
  { label: "City:", value: "Boston", short: true },
  { label: "State:", value: "MA", short: true },
  { label: "Zipcode:", value: "02120", short: true },
  { label: "Phone:", value: "6173648216" },
  { label: "New Password:", value: "" },
];

const OPTIONS = ["Art", "Books", "Comedy", "Food", "Music", "Sales", "Science", "Sports", "Technology"];
const SELECTED = ["Books", "Food", "Science"];

function AccountDialog() {
  return (
    <div className="absolute left-[652.500px] top-[30px] w-[598px] rounded-[6px] border border-black/20 bg-white bg-clip-padding text-[14px] leading-[20px] tracking-[0.12px] text-[#333] shadow-[0_5px_15px_rgba(0,0,0,0.5)]">
      <header className="flex h-[57px] justify-between border-b border-[#e5e5e5] px-[15px] pt-[15px]">
        <h4 className="text-[18px] leading-[26px] tracking-[-0.03px]">Account Details</h4>
        <span className="-mt-[1px] text-[21px] font-bold leading-[21px] text-black/20">×</span>
      </header>
      <div className="p-[15px]">
        {FIELDS.map((f) => (
          <div
            key={f.label}
            className={
              "mb-[15px] flex h-[34px] rounded-[4px] border border-[#ccc] leading-[32px] text-[#555] " +
              (f.short ? "w-[300px]" : "w-full")
            }
          >
            <label className="rounded-l-[3px] border-r border-[#ccc] bg-[#eee] px-[12px]">{f.label}</label>
            <div
              className={
                "flex-1 rounded-r-[3px] pl-[12px] shadow-[inset_0_1px_1px_rgba(0,0,0,0.075)] " +
                (f.disabled ? "bg-[#eee]" : "bg-white")
              }
            >
              {f.value}
            </div>
          </div>
        ))}
        <div className="mb-[5px] font-bold tracking-normal">Preferences</div>
        <div className="relative mb-[15px]">
          <button className="flex h-[34px] w-full items-center justify-between rounded-[4px] border border-[#8c8c8c] bg-[#d4d4d4] pl-[12px] pr-[12px] shadow-[inset_0_3px_5px_rgba(0,0,0,0.125),0_0_0_1px_#78a6f7]">
            <span>{SELECTED.join(", ")}</span>
            <span className="border-x-4 border-t-4 border-x-transparent border-t-[#333]" />
          </button>
          <ul className="absolute left-0 top-full z-10 mt-[2px] w-full rounded-[4px] border border-black/15 bg-white bg-clip-padding py-[5px] shadow-[0_6px_12px_rgba(0,0,0,0.175)]">
            {OPTIONS.map((o) => (
              <li key={o} className="flex h-[26px] items-center justify-between pl-[20px] pr-[15px]">
                {o}
                {SELECTED.includes(o) && <TickIcon />}
              </li>
            ))}
          </ul>
        </div>
      </div>
      <footer className="flex justify-end border-t border-[#e5e5e5] p-[15px]">
        <button className="h-[34px] rounded-[4px] border border-[#2e6da4] bg-[#337ab7] px-[12px] text-white">Save</button>
      </footer>
    </div>
  );
}

export default function App() {
  return (
    <div className="flex h-[983px] w-[1920px] flex-col overflow-hidden font-['Liberation_Sans',Arial,sans-serif]">
      <div className="h-[2px] shrink-0 border-b border-[#a6a6a6] bg-[#dcdcdc]" />
      <div className="relative h-[979px] shrink-0 overflow-hidden bg-white">
        <div className="w-[1903px]">
          <Navbar />
          <Jumbotron />
          <main className="mt-[30px] flex gap-[15px] pl-[15px]">
            <MapPanel />
            <Sidebar />
          </main>
        </div>
        <div className="absolute inset-0 bg-black/50" />
        <AccountDialog />
      </div>
      <div className="flex h-[2px] shrink-0 bg-black">
        <div className="ml-[48px] h-full w-[344px] bg-[#222]" />
        <div className="ml-[344px] h-full w-[48px] bg-[#333]" />
      </div>
    </div>
  );
}
